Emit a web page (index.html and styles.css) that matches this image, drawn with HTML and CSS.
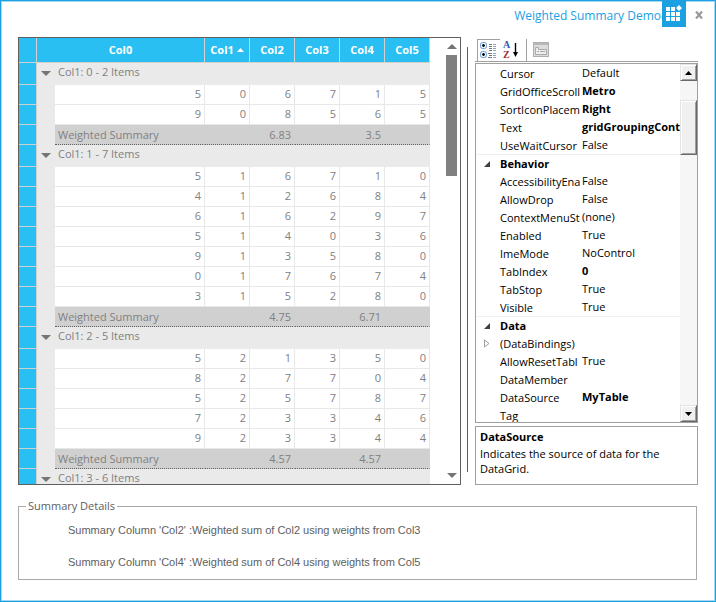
FILE: index.html
```html
<!DOCTYPE html>
<html lang="en">
<head>
<meta charset="utf-8">
<title>Weighted Summary Demo</title>
<link rel="stylesheet" href="styles.css">
</head>
<body>
<div class="window">
  <header class="titlebar">
    <h1 class="title">Weighted Summary Demo</h1>
    <svg class="app-icon" width="24" height="26" viewBox="0 0 24 26" aria-hidden="true">
      <rect width="24" height="26" fill="#1ba1e2"/>
      <path fill="#fff" d="M4 6h4v4H4zM9 6h4v4H9zM4 11h4v4H4zM9 11h4v4H9zM14 11h4v4h-4zM4 16h4v4H4zM9 16h4v4H9zM14 16h4v4h-4zM17 4l3 3-3 3-3-3z"/>
    </svg>
    <button class="close" type="button" aria-label="Close">
      <svg width="8" height="8" viewBox="0 0 8 8"><path d="M1 0.5l6 7M7 0.5l-6 7" stroke="#999" stroke-width="2.2"/></svg>
    </button>
  </header>

  <main class="workspace">
    <section class="grid-pane">
      <div class="grid-view">
        <table class="data-grid">
          <colgroup><col class="c-head"><col class="c-indent"><col class="c-wide"><col class="c-num"><col class="c-num"><col class="c-num"><col class="c-num"><col class="c-num"></colgroup>
          <thead>
            <tr><th class="rh"></th><th colspan="2">Col0</th><th>Col1 <svg class="sort" width="7" height="4" viewBox="0 0 7 4"><path d="M0 4L3.5 0L7 4z" fill="#fff"/></svg></th><th>Col2</th><th>Col3</th><th>Col4</th><th>Col5</th></tr>
          </thead>
          <tbody>
            <tr class="caption"><td class="rh"></td><td class="toggle"><svg width="10" height="5" viewBox="0 0 10 5"><path d="M0 0h10L5 5z" fill="#757575"/></svg></td><td colspan="6">Col1: 0 - 2 Items</td></tr>
            <tr><td class="rh"></td><td class="indent"></td><td>5</td><td>0</td><td>6</td><td>7</td><td>1</td><td>5</td></tr>
            <tr><td class="rh"></td><td class="indent"></td><td>9</td><td>0</td><td>8</td><td>5</td><td>6</td><td>5</td></tr>
            <tr class="summary"><td class="rh"></td><td class="indent"></td><td class="label">Weighted Summary</td><td></td><td>6.83</td><td></td><td>3.5</td><td></td></tr>
          </tbody>
          <tbody>
            <tr class="caption"><td class="rh"></td><td class="toggle"><svg width="10" height="5" viewBox="0 0 10 5"><path d="M0 0h10L5 5z" fill="#757575"/></svg></td><td colspan="6">Col1: 1 - 7 Items</td></tr>
            <tr><td class="rh"></td><td class="indent"></td><td>5</td><td>1</td><td>6</td><td>7</td><td>1</td><td>0</td></tr>
            <tr><td class="rh"></td><td class="indent"></td><td>4</td><td>1</td><td>2</td><td>6</td><td>8</td><td>4</td></tr>
            <tr><td class="rh"></td><td class="indent"></td><td>6</td><td>1</td><td>6</td><td>2</td><td>9</td><td>7</td></tr>
            <tr><td class="rh"></td><td class="indent"></td><td>5</td><td>1</td><td>4</td><td>0</td><td>3</td><td>6</td></tr>
            <tr><td class="rh"></td><td class="indent"></td><td>9</td><td>1</td><td>3</td><td>5</td><td>8</td><td>0</td></tr>
            <tr><td class="rh"></td><td class="indent"></td><td>0</td><td>1</td><td>7</td><td>6</td><td>7</td><td>4</td></tr>
            <tr><td class="rh"></td><td class="indent"></td><td>3</td><td>1</td><td>5</td><td>2</td><td>8</td><td>0</td></tr>
            <tr class="summary"><td class="rh"></td><td class="indent"></td><td class="label">Weighted Summary</td><td></td><td>4.75</td><td></td><td>6.71</td><td></td></tr>
          </tbody>
          <tbody>
            <tr class="caption"><td class="rh"></td><td class="toggle"><svg width="10" height="5" viewBox="0 0 10 5"><path d="M0 0h10L5 5z" fill="#757575"/></svg></td><td colspan="6">Col1: 2 - 5 Items</td></tr>
            <tr><td class="rh"></td><td class="indent"></td><td>5</td><td>2</td><td>1</td><td>3</td><td>5</td><td>0</td></tr>
            <tr><td class="rh"></td><td class="indent"></td><td>8</td><td>2</td><td>7</td><td>7</td><td>0</td><td>4</td></tr>
            <tr><td class="rh"></td><td class="indent"></td><td>5</td><td>2</td><td>5</td><td>7</td><td>8</td><td>7</td></tr>
            <tr><td class="rh"></td><td class="indent"></td><td>7</td><td>2</td><td>3</td><td>3</td><td>4</td><td>6</td></tr>
            <tr><td class="rh"></td><td class="indent"></td><td>9</td><td>2</td><td>3</td><td>3</td><td>4</td><td>4</td></tr>
            <tr class="summary"><td class="rh"></td><td class="indent"></td><td class="label">Weighted Summary</td><td></td><td>4.57</td><td></td><td>4.57</td><td></td></tr>
          </tbody>
          <tbody>
            <tr class="caption"><td class="rh"></td><td class="toggle"><svg width="10" height="5" viewBox="0 0 10 5"><path d="M0 0h10L5 5z" fill="#757575"/></svg></td><td colspan="6">Col1: 3 - 6 Items</td></tr>
          </tbody>
        </table>
      </div>
      <div class="metro-scroll">
        <button type="button" aria-label="Scroll up"><svg width="10" height="5" viewBox="0 0 10 5"><path d="M0 5h10L5 0z" fill="#757575"/></svg></button>
        <div class="metro-track"><div class="metro-thumb"></div></div>
        <button type="button" aria-label="Scroll down"><svg width="10" height="5" viewBox="0 0 10 5"><path d="M0 0h10L5 5z" fill="#757575"/></svg></button>
      </div>
    </section>

    <div class="splitter"></div>

    <aside class="properties">
      <div class="toolbar">
        <button class="tool pressed" type="button" aria-label="Categorized">
          <svg width="18" height="18" viewBox="0 0 18 18">
            <g fill="#e8f3ff" stroke="#6f9fd8"><rect x="0.5" y="0.5" width="6" height="6" rx="2"/><rect x="0.5" y="9.5" width="6" height="6" rx="2"/></g>
            <path d="M2 3.5h3M3.5 2v3M2 12.5h3M3.5 11v3" stroke="#111" stroke-width="1.3"/>
            <path d="M9 2.5h3M9 4.5h3M9 6.5h3M9 8.5h3M8 11.5h4M9 13.5h3M8 15.5h4" stroke="#777"/>
            <path d="M13 2.5h3M13 4.5h3M13 6.5h3M13 8.5h3M13 11.5h3M13 13.5h3M13 15.5h3" stroke="#8aa5c4"/>
          </svg>
        </button>
        <button class="tool" type="button" aria-label="Alphabetical">
          <svg class="az" width="18" height="18" viewBox="0 0 18 18">
            <text x="0" y="7" fill="#3458b5">A</text>
            <text x="0" y="17" fill="#a3282c">Z</text>
            <path d="M12.5 2v11" stroke="#000" stroke-width="1.4"/><path d="M10 11h5l-2.500 5z"/>
          </svg>
        </button>
        <span class="tool-sep"></span>
        <button class="tool" type="button" aria-label="Property pages" disabled>
          <svg width="16" height="16" viewBox="0 0 16 16">
            <rect x="0.5" y="0.5" width="15" height="14" fill="#dcdcdc" stroke="#b0b0b0"/>
            <path d="M1 2h14" stroke="#b8b8b8" stroke-width="2"/>
            <path d="M2.5 12.5v-7h3v2h8v5z" fill="#eee" stroke="#aaa"/>
            <path d="M4 9.5h2M7 9.5h5" stroke="#aaa"/>
          </svg>
        </button>
      </div>

      <div class="prop-box">
        <div class="prop-view">
          <table class="prop-table">
            <colgroup><col class="p-margin"><col class="p-name"><col></colgroup>
            <tbody>
              <tr><td></td><th>Cursor</th><td>Default</td></tr>
              <tr><td></td><th>GridOfficeScroll</th><td class="set">Metro</td></tr>
              <tr><td></td><th>SortIconPlacem</th><td class="set">Right</td></tr>
              <tr><td></td><th>Text</th><td class="set">gridGroupingContr</td></tr>
              <tr><td></td><th>UseWaitCursor</th><td>False</td></tr>
            </tbody>
            <tbody>
              <tr class="category"><td class="expander"><svg width="6" height="6" viewBox="0 0 6 6"><path d="M6 0v6H0z" fill="#404040"/></svg></td><th colspan="2">Behavior</th></tr>
              <tr><td></td><th>AccessibilityEna</th><td>False</td></tr>
              <tr><td></td><th>AllowDrop</th><td>False</td></tr>
              <tr><td></td><th>ContextMenuSt</th><td>(none)</td></tr>
              <tr><td></td><th>Enabled</th><td>True</td></tr>
              <tr><td></td><th>ImeMode</th><td>NoControl</td></tr>
              <tr><td></td><th>TabIndex</th><td class="set">0</td></tr>
              <tr><td></td><th>TabStop</th><td>True</td></tr>
              <tr><td></td><th>Visible</th><td>True</td></tr>
            </tbody>
            <tbody>
              <tr class="category"><td class="expander"><svg width="6" height="6" viewBox="0 0 6 6"><path d="M6 0v6H0z" fill="#404040"/></svg></td><th colspan="2">Data</th></tr>
              <tr><td class="expander"><svg width="6" height="9" viewBox="0 0 6 9"><path d="M0.5 1v7L5 4.5z" fill="#fff" stroke="#a0a0a0"/></svg></td><th>(DataBindings)</th><td></td></tr>
              <tr><td></td><th>AllowResetTabl</th><td>True</td></tr>
              <tr><td></td><th>DataMember</th><td></td></tr>
              <tr><td></td><th>DataSource</th><td class="set">MyTable</td></tr>
              <tr><td></td><th>Tag</th><td></td></tr>
            </tbody>
          </table>
        </div>
        <div class="classic-scroll">
          <button type="button" aria-label="Scroll up"><svg width="7" height="4" viewBox="0 0 7 4"><path d="M0 4h7L3.5 0z"/></svg></button>
          <div class="classic-track"><div class="classic-thumb"></div></div>
          <button type="button" aria-label="Scroll down"><svg width="7" height="4" viewBox="0 0 7 4"><path d="M0 0h7L3.5 4z"/></svg></button>
        </div>
      </div>

      <div class="description">
        <strong>DataSource</strong>
        <p>Indicates the source of data for the DataGrid.</p>
      </div>
    </aside>
  </main>

  <fieldset class="details">
    <legend>Summary Details</legend>
    <p>Summary Column 'Col2' :Weighted sum of Col2 using weights from Col3</p>
    <p>Summary Column 'Col4' :Weighted sum of Col4 using weights from Col5</p>
  </fieldset>
</div>
</body>
</html>
```
FILE: styles.css
```css
* { box-sizing: border-box; }

body {
  margin: 0;
  background: #fff;
  font: 11px/14px "Open Sans", "Noto Sans", sans-serif;
}

button {
  display: flex;
  align-items: center;
  justify-content: center;
  padding: 0;
  border: 0;
  background: none;
}

svg { display: block; }
p { margin: 0; }

.window {
  display: flex;
  flex-direction: column;
  height: 100vh;
  border: 1px solid #1ba1e2;
  box-shadow: inset 0 0 0 1px #a4d9f3;
  padding: 0 17px 21px;
}

/* Title bar */
.titlebar {
  display: flex;
  justify-content: flex-end;
  flex: none;
  height: 36px;
  margin-right: -5px;
}
.title {
  margin: 0;
  padding: 6px 1px 0 0;
  font-size: 12px;
  line-height: 18px;
  font-weight: 400;
  color: #1ba1e2;
}
.close { width: 8px; height: 8px; margin: 10px 0 0 9px; }

/* Workspace */
.workspace {
  display: grid;
  grid-template-columns: minmax(0, 1fr) 1px 230px;
  grid-template-rows: minmax(0, 1fr);
  flex: 1;
  min-height: 0;
}
.grid-pane {
  display: flex;
  margin-right: 6px;
  border: 1px solid #606060;
}
.splitter { margin: 10px 0 13px; background: #606060; }

/* Data grid */
.grid-view { flex: 1; min-width: 0; overflow: hidden; }
.data-grid {
  width: 411px;
  table-layout: fixed;
  border-collapse: separate;
  border-spacing: 0;
  color: #808080;
}
.c-head, .c-indent { width: 18px; }
.c-wide { width: 150px; }
.c-num { width: 45px; }
.data-grid th {
  height: 25px;
  padding: 0;
  border: solid #d0d0d0;
  border-width: 0 1px 1px 0;
  background: #2abff2;
  color: #fff;
  font-weight: 700;
}
.sort { display: inline-block; vertical-align: 2px; }
.data-grid td {
  height: 20px;
  padding: 0 3px 1px;
  border: solid #e8e8e8;
  border-width: 0 1px 1px 0;
  text-align: right;
  white-space: nowrap;
}
.data-grid td.rh { background: #2abff2; border-color: #d0d0d0; }
.data-grid .indent, .data-grid .caption td:not(.rh) { background: #eaeaea; border-color: #eaeaea; }
.data-grid .caption td { height: 22px; padding-bottom: 3px; text-align: left; }
.data-grid td.toggle { padding: 0 4px; }
.data-grid .summary td:not(.rh, .indent) {
  padding-bottom: 0;
  background: #d0d0d0;
  border-right-color: #d0d0d0;
  border-bottom: 1px dotted #606060;
}
.data-grid .summary .label { text-align: left; }

.metro-scroll {
  display: flex;
  flex-direction: column;
  flex: none;
  width: 11px;
  margin-right: 3px;
}
.metro-scroll button { height: 17px; }
.metro-track { flex: 1; }
.metro-thumb { height: 121px; background: #808080; }

/* Property grid */
.properties {
  display: flex;
  flex-direction: column;
  min-height: 0;
  margin-left: 7px;
  color: #000;
}
.toolbar {
  display: flex;
  align-items: center;
  flex: none;
  height: 25px;
  padding: 2px 0 0 2px;
  border-bottom: 1px solid #a0a0a0;
}
.tool { width: 23px; height: 22px; }
.pressed { border: solid #a0a0a0; border-width: 1px 0 0 1px; }
.tool-sep { width: 1px; height: 22px; margin: 0 2px 0 3px; background: #a0a0a0; }
.az { font: 700 10px "Liberation Serif", serif; }

.prop-box {
  display: flex;
  flex: 1;
  min-height: 0;
  margin: 1px 0 3px;
  border: 1px solid #a0a0a0;
}
.prop-view { flex: 1; min-width: 0; overflow: hidden; }
.prop-table {
  width: 100%;
  table-layout: fixed;
  border-collapse: separate;
  border-spacing: 0;
}
.p-margin { width: 24px; }
.p-name { width: 77px; }
.prop-table th, .prop-table td {
  height: 18px;
  padding: 0;
  text-align: left;
  white-space: nowrap;
  font-weight: 400;
}
.prop-table th { padding-top: 2px; }
.prop-table td + th + td { padding-left: 5px; }
.prop-table td.set, .prop-table .category th { font-weight: 700; }
.prop-table .category > * { padding-top: 0; border-top: 1px solid #f0f0f0; }
.prop-table td.expander { padding-left: 8px; }

.classic-scroll {
  display: flex;
  flex-direction: column;
  flex: none;
  width: 17px;
  background: #f6f6f6;
}
.classic-scroll button, .classic-thumb {
  flex: none;
  height: 17px;
  background: #f0f0f0;
  border: 1px solid;
  border-color: #e3e3e3 #696969 #696969 #e3e3e3;
  box-shadow: inset 1px 1px #fff, inset -1px -1px #a0a0a0;
}
.classic-track { flex: 1; padding-top: 19px; }
.classic-scroll .classic-thumb { height: 55px; }

.description {
  flex: none;
  height: 59px;
  padding: 2px 4px;
  border: 1px solid #a0a0a0;
  line-height: 15px;
}
.description strong { display: block; margin-bottom: 2px; }

/* Summary details */
.details {
  flex: none;
  min-width: 0;
  margin: 14px 1px 0 0;
  padding: 9px 49px;
  border: 1px solid #a9a9a9;
  color: #606060;
  font: 11px/16px "Liberation Sans", Arial, sans-serif;
}
.details legend {
  margin-left: -42px;
  padding: 0 2px;
  font: 11px/14px "Open Sans", "Noto Sans", sans-serif;
}
.details p + p { margin-top: 16px; }
```
